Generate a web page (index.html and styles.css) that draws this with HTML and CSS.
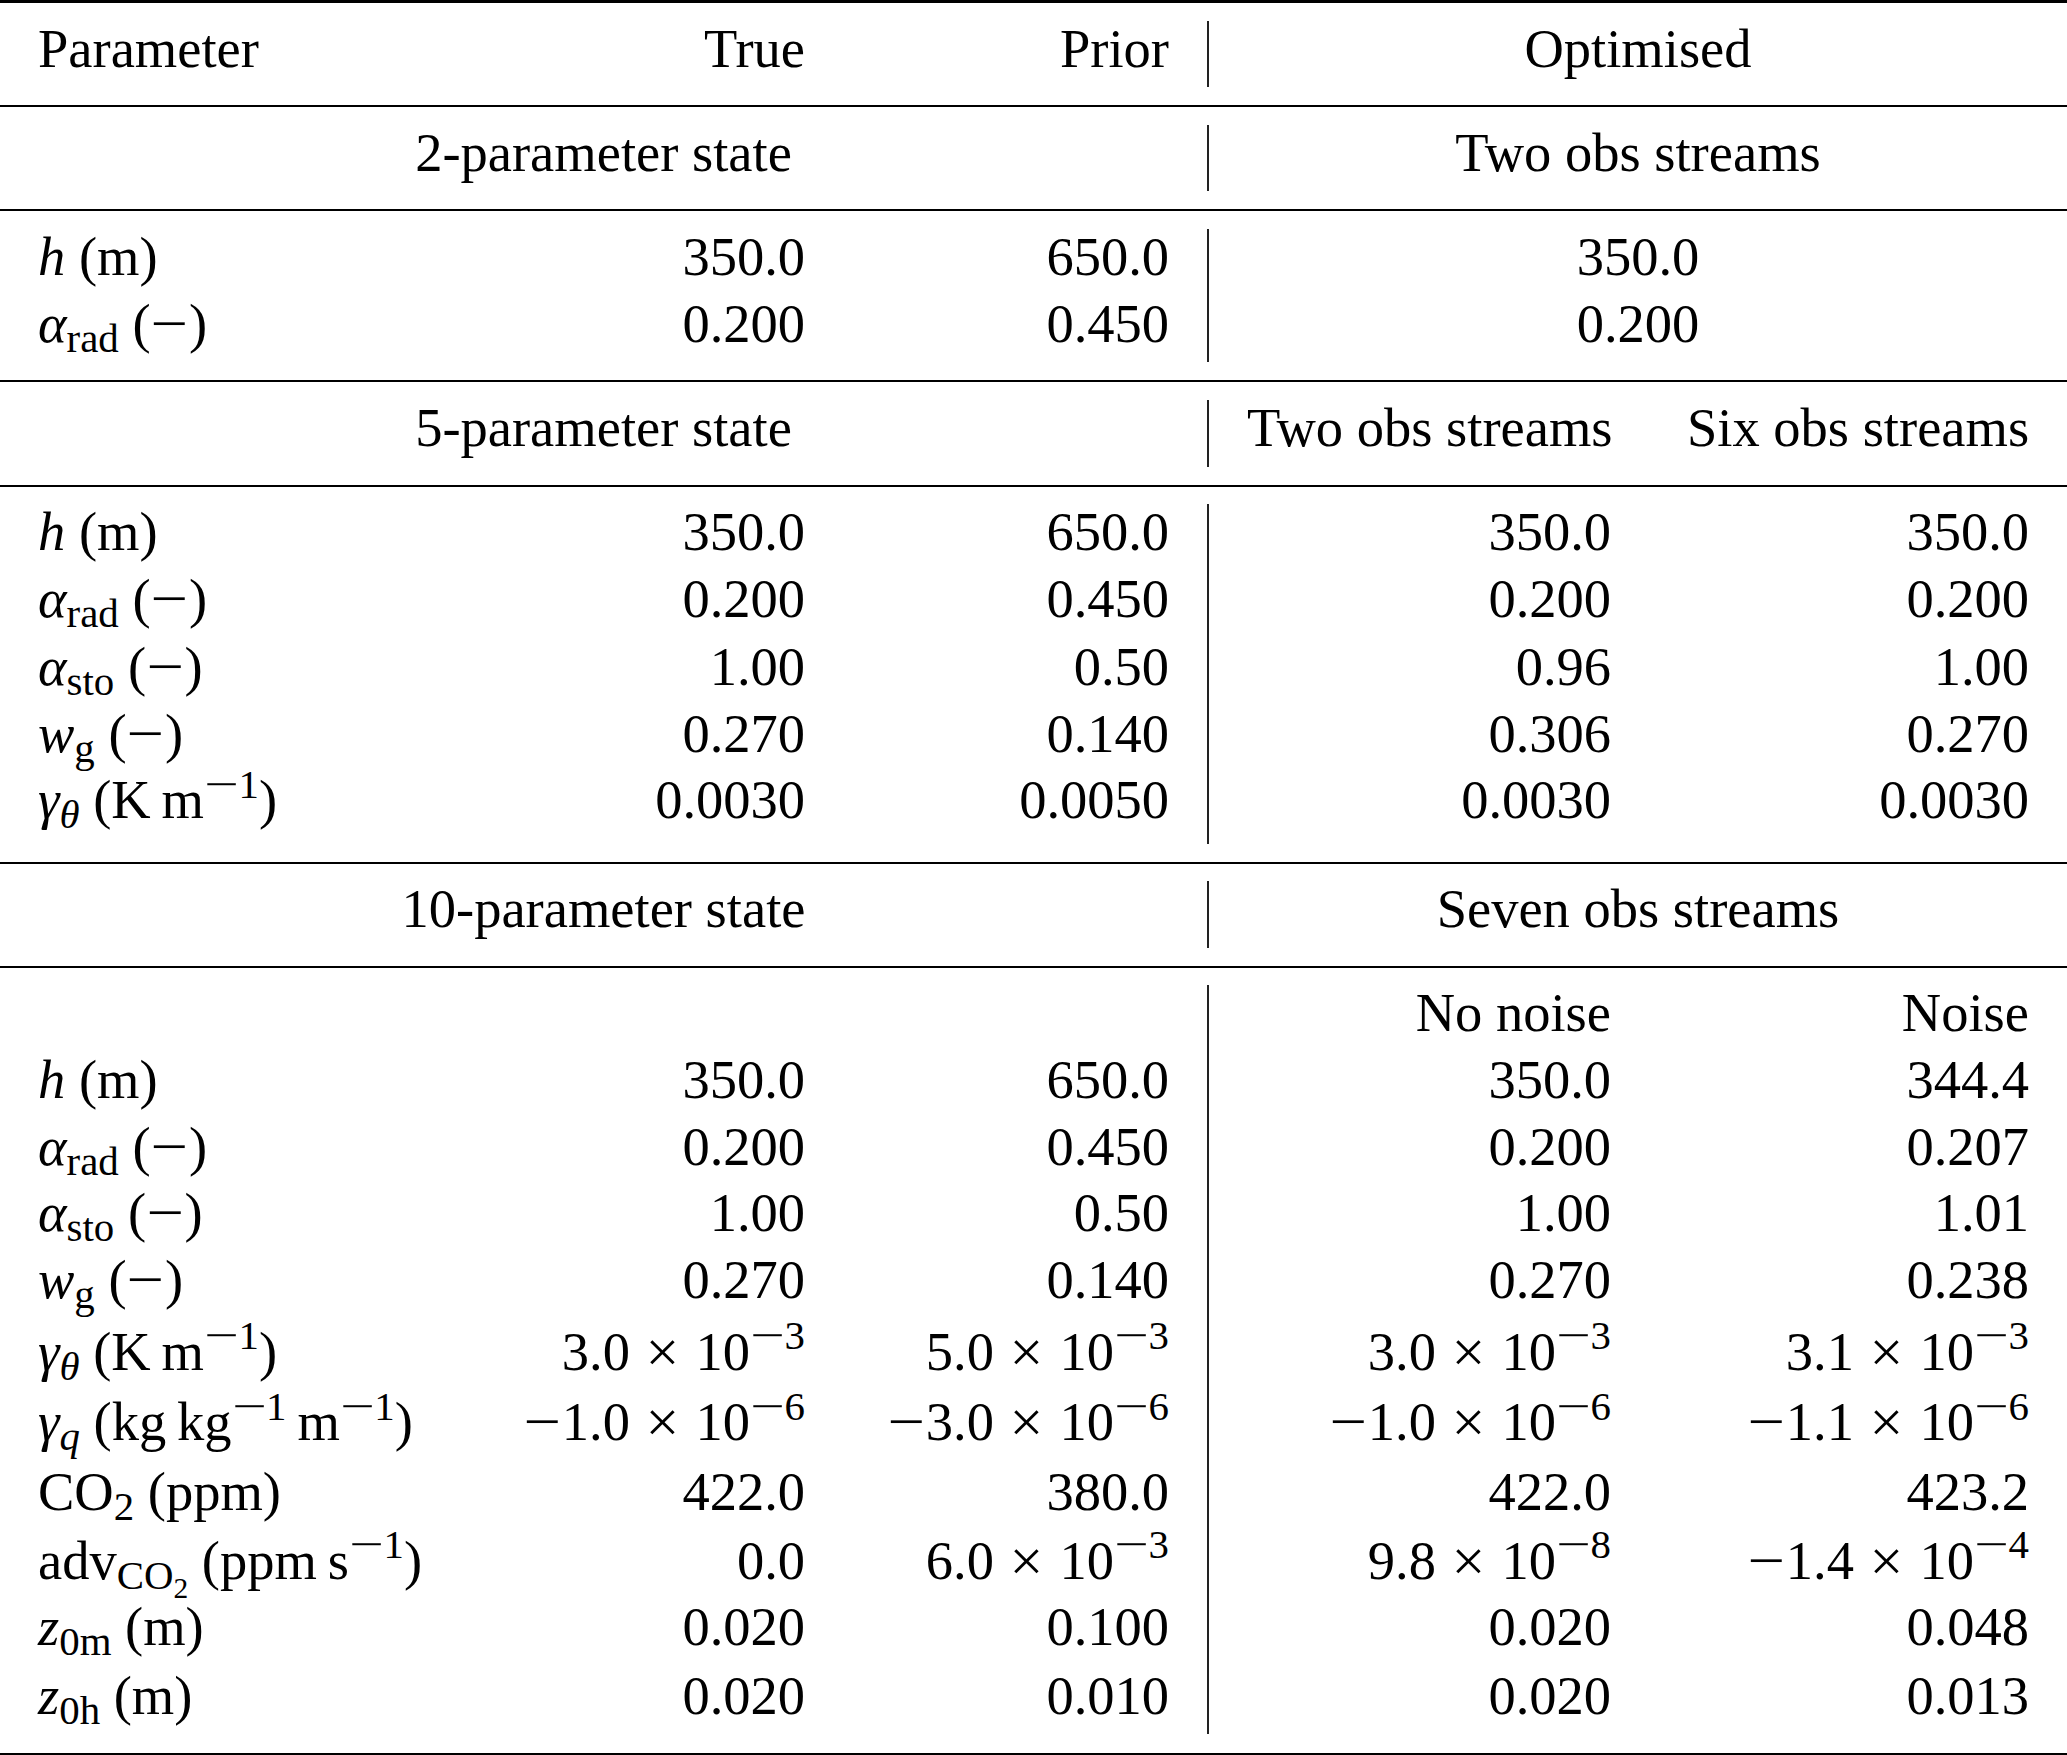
FILE: index.html
```html
<!DOCTYPE html>
<html lang="en">
<head>
<meta charset="utf-8">
<title>Parameter estimation table</title>
<link rel="stylesheet" href="styles.css">
</head>
<body>
<table class="tbl">
  <colgroup>
    <col class="c1"><col class="c2"><col class="c3"><col class="c4"><col class="c5">
  </colgroup>
  <tbody>
    <tr class="pt"><td colspan="5"></td></tr>
    <tr class="row">
      <td class="l">Parameter</td><td class="r">True</td><td class="r">Prior</td>
      <td class="c v" colspan="2">Optimised</td>
    </tr>
    <tr class="pb"><td colspan="5"></td></tr>

    <tr class="pt"><td colspan="5"></td></tr>
    <tr class="row">
      <td class="c" colspan="3">2-parameter state</td>
      <td class="c v" colspan="2">Two obs streams</td>
    </tr>
    <tr class="pb"><td colspan="5"></td></tr>

    <tr class="pt"><td colspan="5"></td></tr>
    <tr class="row">
      <td class="l"><i>h</i> (m)</td><td class="r">350.0</td><td class="r">650.0</td>
      <td class="c v" colspan="2">350.0</td>
    </tr>
    <tr class="row">
      <td class="l"><i>α</i><sub class="sb">rad</sub> (<span class="mi">−</span>)</td><td class="r">0.200</td><td class="r">0.450</td>
      <td class="c v" colspan="2">0.200</td>
    </tr>
    <tr class="pb"><td colspan="5"></td></tr>

    <tr class="pt"><td colspan="5"></td></tr>
    <tr class="row">
      <td class="c" colspan="3">5-parameter state</td>
      <td class="r v">Two obs streams</td><td class="r">Six obs streams</td>
    </tr>
    <tr class="pb"><td colspan="5"></td></tr>

    <tr class="pt"><td colspan="5"></td></tr>
    <tr class="row">
      <td class="l"><i>h</i> (m)</td><td class="r">350.0</td><td class="r">650.0</td>
      <td class="r v">350.0</td><td class="r">350.0</td>
    </tr>
    <tr class="row">
      <td class="l"><i>α</i><sub class="sb">rad</sub> (<span class="mi">−</span>)</td><td class="r">0.200</td><td class="r">0.450</td>
      <td class="r v">0.200</td><td class="r">0.200</td>
    </tr>
    <tr class="row nudge">
      <td class="l"><i>α</i><sub class="sb">sto</sub> (<span class="mi">−</span>)</td><td class="r">1.00</td><td class="r">0.50</td>
      <td class="r v">0.96</td><td class="r">1.00</td>
    </tr>
    <tr class="row">
      <td class="l"><i>w</i><sub class="sb">g</sub> (<span class="mi">−</span>)</td><td class="r">0.270</td><td class="r">0.140</td>
      <td class="r v">0.306</td><td class="r">0.270</td>
    </tr>
    <tr class="row deep">
      <td class="l"><i>γ</i><sub class="sb"><i>θ</i></sub> (K&thinsp;m<sup class="sp"><span class="mi">−</span>1</sup>)</td><td class="r">0.0030</td><td class="r">0.0050</td>
      <td class="r v">0.0030</td><td class="r">0.0030</td>
    </tr>
    <tr class="pb"><td colspan="5"></td></tr>

    <tr class="pt"><td colspan="5"></td></tr>
    <tr class="row">
      <td class="c" colspan="3">10-parameter state</td>
      <td class="c v" colspan="2">Seven obs streams</td>
    </tr>
    <tr class="pb"><td colspan="5"></td></tr>

    <tr class="pt"><td colspan="5"></td></tr>
    <tr class="row">
      <td class="l"></td><td class="r"></td><td class="r"></td>
      <td class="r v">No noise</td><td class="r">Noise</td>
    </tr>
    <tr class="row">
      <td class="l"><i>h</i> (m)</td><td class="r">350.0</td><td class="r">650.0</td>
      <td class="r v">350.0</td><td class="r">344.4</td>
    </tr>
    <tr class="row">
      <td class="l"><i>α</i><sub class="sb">rad</sub> (<span class="mi">−</span>)</td><td class="r">0.200</td><td class="r">0.450</td>
      <td class="r v">0.200</td><td class="r">0.207</td>
    </tr>
    <tr class="row">
      <td class="l"><i>α</i><sub class="sb">sto</sub> (<span class="mi">−</span>)</td><td class="r">1.00</td><td class="r">0.50</td>
      <td class="r v">1.00</td><td class="r">1.01</td>
    </tr>
    <tr class="row">
      <td class="l"><i>w</i><sub class="sb">g</sub> (<span class="mi">−</span>)</td><td class="r">0.270</td><td class="r">0.140</td>
      <td class="r v">0.270</td><td class="r">0.238</td>
    </tr>
    <tr class="row lift5">
      <td class="l"><i>γ</i><sub class="sb"><i>θ</i></sub> (K&thinsp;m<sup class="sp"><span class="mi">−</span>1</sup>)</td>
      <td class="r">3.0<span class="x">×</span>10<sup class="sp"><span class="mi">−</span>3</sup></td>
      <td class="r">5.0<span class="x">×</span>10<sup class="sp"><span class="mi">−</span>3</sup></td>
      <td class="r v">3.0<span class="x">×</span>10<sup class="sp"><span class="mi">−</span>3</sup></td>
      <td class="r">3.1<span class="x">×</span>10<sup class="sp"><span class="mi">−</span>3</sup></td>
    </tr>
    <tr class="row lift4">
      <td class="l"><i>γ</i><sub class="sb"><i>q</i></sub> (kg&thinsp;kg<sup class="sp"><span class="mi">−</span>1</sup>&thinsp;m<sup class="sp"><span class="mi">−</span>1</sup>)</td>
      <td class="r"><span class="mi">−</span>1.0<span class="x">×</span>10<sup class="sp"><span class="mi">−</span>6</sup></td>
      <td class="r"><span class="mi">−</span>3.0<span class="x">×</span>10<sup class="sp"><span class="mi">−</span>6</sup></td>
      <td class="r v"><span class="mi">−</span>1.0<span class="x">×</span>10<sup class="sp"><span class="mi">−</span>6</sup></td>
      <td class="r"><span class="mi">−</span>1.1<span class="x">×</span>10<sup class="sp"><span class="mi">−</span>6</sup></td>
    </tr>
    <tr class="row">
      <td class="l">CO<sub class="sb">2</sub> (ppm)</td><td class="r">422.0</td><td class="r">380.0</td>
      <td class="r v">422.0</td><td class="r">423.2</td>
    </tr>
    <tr class="row lift2">
      <td class="l">adv<sub class="sb">CO<sub class="sb2">2</sub></sub> (ppm&thinsp;s<sup class="sp"><span class="mi">−</span>1</sup>)</td>
      <td class="r">0.0</td>
      <td class="r">6.0<span class="x">×</span>10<sup class="sp"><span class="mi">−</span>3</sup></td>
      <td class="r v">9.8<span class="x">×</span>10<sup class="sp"><span class="mi">−</span>8</sup></td>
      <td class="r"><span class="mi">−</span>1.4<span class="x">×</span>10<sup class="sp"><span class="mi">−</span>4</sup></td>
    </tr>
    <tr class="row">
      <td class="l"><i>z</i><sub class="sb">0m</sub> (m)</td><td class="r">0.020</td><td class="r">0.100</td>
      <td class="r v">0.020</td><td class="r">0.048</td>
    </tr>
    <tr class="row nudge">
      <td class="l"><i>z</i><sub class="sb">0h</sub> (m)</td><td class="r">0.020</td><td class="r">0.010</td>
      <td class="r v">0.020</td><td class="r">0.013</td>
    </tr>
    <tr class="pb last"><td colspan="5"></td></tr>
  </tbody>
</table>
</body>
</html>
```

FILE: styles.css
```css
html, body {
  margin: 0;
  padding: 0;
  background: #ffffff;
}

.tbl {
  width: 2067px;
  table-layout: fixed;
  border-collapse: separate;
  border-spacing: 0;
  border-top: 3px solid #000;
  border-bottom: 3px solid #000;
  font-family: "Liberation Serif", "Times New Roman", serif;
  font-size: 54.5px;
  color: #000;
}

.c1 { width: 477px; }
.c2 { width: 366px; }
.c3 { width: 364px; }
.c4 { width: 442px; }
.c5 { width: 418px; }

.row td {
  padding: 0 38px 10px 38px;
  line-height: 56.7px;
  vertical-align: baseline;
  white-space: nowrap;
}

.l { text-align: left; }
.r { text-align: right; }
.c { text-align: center; }

.row td.v {
  border-left: 2px solid #222;
}

.pt td {
  height: 17.5px;
  padding: 0;
  font-size: 0;
  line-height: 0;
}

.pb td {
  height: 18px;
  padding: 0;
  font-size: 0;
  line-height: 0;
  border-bottom: 2px solid #000;
}

.pb.last td {
  height: 18.5px;
  border-bottom: 0;
}

.row.nudge td { padding-top: 1.6px; }
.row.deep td { padding-bottom: 14.4px; }
.row.lift5 td { padding-top: 5px; }
.row.lift4 td { padding-top: 4px; padding-bottom: 12.4px; }
.row.lift2 td { padding-top: 2.3px; }

.sb {
  font-size: 0.75em;
  vertical-align: -0.25em;
  line-height: 0;
}

.sb2 {
  font-size: 0.72em;
  vertical-align: -0.3em;
  line-height: 0;
}

.sp {
  font-size: 0.75em;
  vertical-align: 0.5em;
  line-height: 0;
}

.mi {
  display: inline-block;
  transform: scaleX(1.22);
  margin: 0 0.07em;
}

.sp .mi {
  transform: scaleX(1.5);
  margin: 0 0.13em 0 0.15em;
}

.x {
  display: inline-block;
  transform: scale(1.1);
  margin: 0 0.32em;
}
```
